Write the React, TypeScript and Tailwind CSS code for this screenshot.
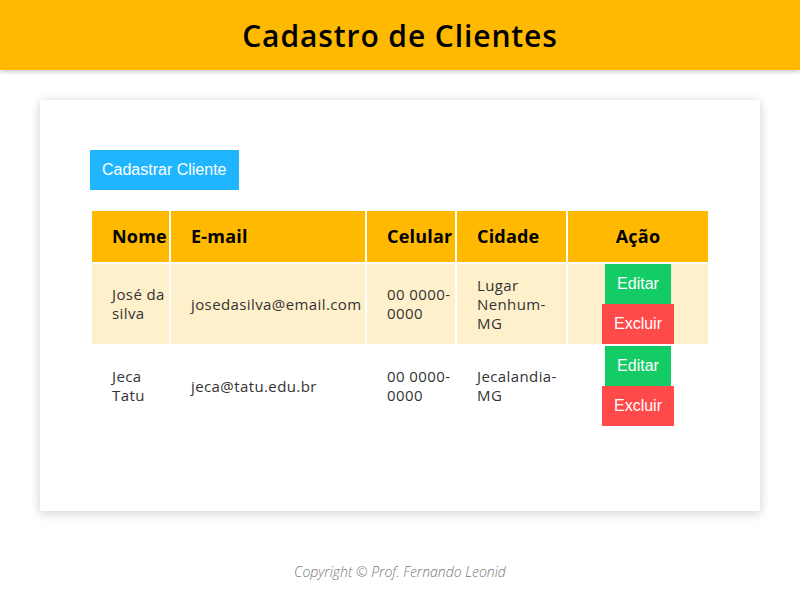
import React from "react";

type Cliente = {
  nome: string;
  email: string;
  celular: string;
  cidade: string;
};

const clientes: Cliente[] = [
  { nome: "José da silva", email: "josedasilva@email.com", celular: "00 0000-0000", cidade: "Lugar Nenhum-MG" },
  { nome: "Jeca Tatu", email: "jeca@tatu.edu.br", celular: "00 0000-0000", cidade: "Jecalandia-MG" },
];

const btn = "block h-10 px-3 text-white text-[16px] font-['Liberation_Sans',Arial,sans-serif]";

export default function App() {
  return (
    <div className="min-h-screen bg-white font-['Open_Sans',sans-serif]">
      <header className="h-[70px] bg-[#ffb900] flex items-center justify-center shadow-[0_2px_4px_rgba(0,0,0,0.2)]">
        <h1 className="text-[30px] font-semibold text-black tracking-[0.9px]">Cadastro de Clientes</h1>
      </header>

      <main className="px-10 pt-[30px]">
        <div className="bg-white shadow-[0_2px_10px_rgba(0,0,0,0.2)] px-[50px] pt-[50px] pb-[83px]">
          <button className="h-10 px-3 bg-[#1fb5ff] text-white text-[16px] font-['Liberation_Sans',Arial,sans-serif]">
            Cadastrar Cliente
          </button>

          <table className="mt-[19px] w-full table-fixed border-separate border-spacing-[2px] text-[15px] text-[#333] tracking-[0.4px]">
            <thead>
              <tr className="bg-[#ffb900] text-black text-[18px] font-semibold tracking-[0.2px]">
                <th className="w-[77px] h-[51px] pl-[20px] text-left align-middle">Nome</th>
                <th className="w-[194px] pl-[20px] text-left align-middle">E-mail</th>
                <th className="w-[88px] pl-[20px] text-left align-middle">Celular</th>
                <th className="w-[109px] pl-[20px] text-left align-middle">Cidade</th>
                <th className="text-center align-middle">Ação</th>
              </tr>
            </thead>
            <tbody>
              {clientes.map((c, i) => (
                <tr key={c.email} className={i % 2 === 0 ? "bg-[#fff0cc]" : "bg-white"}>
                  <td className="pl-[20px] pr-1 align-middle leading-[19px]">{c.nome}</td>
                  <td className="pl-[20px] align-middle whitespace-nowrap">{c.email}</td>
                  <td className="pl-[20px] align-middle leading-[19px]">{c.celular}</td>
                  <td className="pl-[20px] pr-2 align-middle leading-[19px]">{c.cidade}</td>
                  <td className="p-0 align-middle">
                    <div className="flex flex-col items-center tracking-normal">
                      <button className={`${btn} bg-[#14cc66]`}>Editar</button>
                      <button className={`${btn} bg-[#ff4a4a]`}>Excluir</button>
                    </div>
                  </td>
                </tr>
              ))}
            </tbody>
          </table>
        </div>
      </main>

      <footer className="pt-[50px] text-center">
        <p className="text-[14px] italic font-light text-[#777]">Copyright © Prof. Fernando Leonid</p>
      </footer>
    </div>
  );
}
